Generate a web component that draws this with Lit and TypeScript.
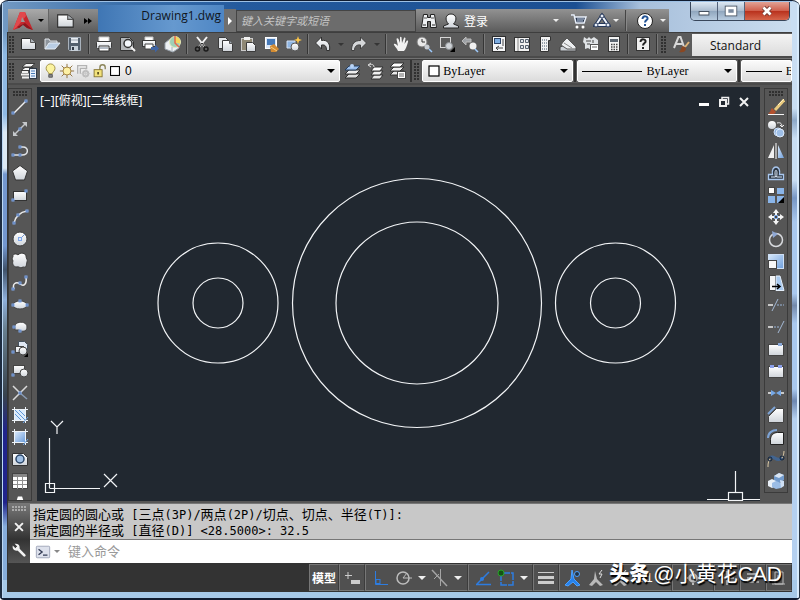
import { LitElement, html, css, svg, nothing } from "lit";
import { customElement } from "lit/decorators.js";

const node = (x: number, y: number) =>
  svg`<rect x=${x - 1} y=${y - 1} width="2" height="2" fill="#3c4a60" stroke="#7fa8ec" stroke-width="1"/>`;

const icons: Record<string, unknown> = {
  new: svg`<path d="M1.500 3.500h9l5 4v7h-14z" fill="url(#paper)" stroke="#2c2c2c"/><path d="M10.500 3.500v4h5" fill="#aeb4ba" stroke="#555"/>`,
  open: svg`<path d="M2 14V4h4l1 2h7v2" fill="#8e959d" stroke="#e0e4e8"/><path d="M2 14l4-6h11l-5 6z" fill="#b9cde4" stroke="#e6edf5"/>`,
  save: svg`<path d="M2.500 2.500h12v13h-11l-1-1z" fill="#54606e" stroke="#a9b2bc"/><rect x="5" y="3" width="7" height="5" fill="#e9edf2"/><path d="M5 5h7" stroke="#98a2ad"/><rect x="5" y="11" width="7" height="5" fill="#c8d1da"/><rect x="6" y="12" width="2" height="3" fill="#303844"/>`,
  print: svg`<path d="M4 7V2h10v5" fill="#fff" stroke="#c9c9c9"/><rect x="1.500" y="6.500" width="15" height="7" rx="1" fill="url(#paper)" stroke="#3a3a3a"/><path d="M4 11h10v5H4z" fill="#fff" stroke="#333"/><path d="M5 13h8" stroke="#6d7c90"/>`,
  preview: svg`<path d="M2.500 2.500h9l4 4v9h-13z" fill="#b4b7ba" stroke="#333"/><circle cx="10" cy="8.500" r="4" fill="#f3f7fb" stroke="#333" stroke-width="1.500"/><path d="M13 12l4 4" stroke="#f2f2f2" stroke-width="2"/>`,
  publish: svg`<path d="M4 6V2h8v4" fill="#fff" stroke="#c9c9c9"/><rect x="1.500" y="5.500" width="13" height="6" fill="url(#paper)" stroke="#3a3a3a"/><path d="M4 9h8v5H4z" fill="#fff" stroke="#444"/><path d="M10 12h4V9.500l4 4-4 4V15h-4z" fill="#3e64a4"/>`,
  dwf: svg`<path d="M1 8l5-4 9 4v5l-6 4-8-3z" fill="#edf0f3" stroke="#9aa3ad"/><circle cx="11" cy="7" r="5.500" fill="#9fd0b7" stroke="#e5e9c0"/><path d="M11 1.500c4 0 6 4 5 7l-5-1z" fill="#f4d75e"/><path d="M11 1v7l4 4" stroke="#e3694d" fill="none" stroke-width="1.500"/><path d="M8 12v5" stroke="#a9b2bc"/>`,
  cut: svg`<path d="M4 2l8 10M14 2L6 12" stroke="#f3f3f3" stroke-width="2"/><circle cx="4.500" cy="14" r="2" fill="none" stroke="#1b1b1b" stroke-width="1.500"/><circle cx="13" cy="14" r="2" fill="none" stroke="#1b1b1b" stroke-width="1.500"/><path d="M6 12l3-4 3 4" stroke="#1b1b1b" fill="none"/>`,
  copy: svg`<path d="M2.500 2.500h7l3 3v8h-10z" fill="#e4e7ea" stroke="#3b3b3b"/><path d="M6.500 5.500h7l3 3v8h-10z" fill="url(#paper)" stroke="#3b3b3b"/><path d="M13.500 5.500v3h3" fill="#9ea6ae" stroke="#555"/>`,
  paste: svg`<rect x="2.500" y="3.500" width="11" height="12" fill="#8f8874" stroke="#ccc"/><rect x="5" y="2" width="6" height="3" fill="#f2f2f2"/><path d="M7.500 7.500h6l3 3v6h-9z" fill="url(#paper)" stroke="#3b3b3b"/>`,
  match: svg`<rect x="3.500" y="2.500" width="11" height="11" fill="#d9e6f6" stroke="#fff"/><rect x="5" y="4" width="8" height="6" fill="#477ab8"/><path d="M8 11l4-2 5 5-3 3H9z" fill="#d38b32"/><path d="M9 12l6 4" stroke="#f9cf80"/>`,
  block: svg`<path d="M2 6h8v7H2z" fill="#8fb5e2" stroke="#d6e3f5"/><circle cx="10" cy="12" r="4" fill="url(#paper)" stroke="#555"/><path d="M13 1l1 3 3 1-3 1-1 3-1-3-3-1 3-1z" fill="#ffc84a"/>`,
  undo: svg`<path d="M1.500 8l6-6v3.500c6-1 9 3 8 10h-3c0-4-1-6-5-5.500V14z" fill="url(#paper)" stroke="#303030"/>`,
  redo: svg`<path d="M16.500 8l-6-6v3.500c-6 0-9 3-9 10h3c0-4 2-6 6-5.500V14z" fill="#d5d7d9" stroke="#404040"/>`,
  pan: svg`<path d="M6 16c-1-3-5-6-4-7s3 1 4 2L4.500 4c0-1 1.500-1 2 0L8 8V2.500c0-1 1.500-1 1.500 0L10 8l2-5c0-1 1.500-.5 1.500.5L12.500 9l2-3c1-1 2 0 1.500 1-1 3-2 7-4 9z" fill="#f2f2f2"/>`,
  zoomrt: svg`<circle cx="7" cy="7" r="5" fill="#e9e9e9" stroke="#777"/><path d="M7 4v3h3" stroke="#333" fill="none"/><circle cx="12" cy="12" r="2.500" fill="#c7ccd2"/><path d="M14 14l3 3" stroke="#9ecbff" stroke-width="1.500"/>`,
  zoomwin: svg`<rect x="2.500" y="2.500" width="10" height="10" fill="none" stroke="#d5d5d5"/><circle cx="11" cy="11" r="3.500" fill="#cfd3d7" stroke="#8b8f93"/><path d="M17 12v5h-5z" fill="#000"/>`,
  zoomprev: svg`<path d="M1 6l4-4v2h5v3H5v3z" fill="#9da1a6" stroke="#bbb"/><circle cx="12" cy="11" r="3.500" fill="#f0f0f0"/><path d="M14 14l3 3" stroke="#9ecbff" stroke-width="1.500"/>`,
  props: svg`<rect x="2.500" y="1.500" width="13" height="15" fill="#f5f6f8" stroke="#2e2e2e"/><rect x="4.500" y="3.500" width="6" height="5" fill="#7eaee2" stroke="#2c4468"/><path d="M13 4v7M6 13h7M9 11l-3 2 2 2" stroke="#444" fill="none"/>`,
  design: svg`<rect x="1.500" y="2.500" width="15" height="14" fill="#f2f2f2" stroke="#333"/><path d="M5 3v13" stroke="#888"/><path d="M7.500 4.500h3v3h-3zM12.500 4.500h3v3h-3zM7.500 10.500h3v3h-3zM12.500 10.500h3v3h-3z" fill="#dfe4ea" stroke="#56616e"/>`,
  palettes: svg`<path d="M4.500 1.500h10v4h-2v11h-8z" fill="#f2f2f2" stroke="#333"/><path d="M6.500 4v11M8.500 4v11M10.500 4v11" stroke="#97a0aa" stroke-dasharray="2 1"/>`,
  sheets: svg`<path d="M1 12l5-2 11 2v4H1z" fill="#cbd0d5" stroke="#444"/><path d="M4 7l4-4 9 9v2H8L2 10z" fill="#eceef0" stroke="#555"/><path d="M5 8l8 5" stroke="#888"/>`,
  markup: svg`<path d="M2 2l3 2 2-2 2 2 3-2 4 3v6l-2 1 1 2-4-1-2 2-3-2-3 1V9L1 7z" fill="#dfe2e5"/><path d="M4 6h5M5 9h3M11 5v3" stroke="#444"/><rect x="8.500" y="9.500" width="8" height="6" fill="#fff" stroke="#555"/><path d="M10 12h5" stroke="#666"/>`,
  calc: svg`<rect x="3.500" y="1.500" width="11" height="15" fill="#f2f2f2" stroke="#333"/><rect x="5" y="4" width="8" height="3" fill="#5b6570"/><path d="M6 9.500h7M6 12h7M6 14.500h7" stroke="#444" stroke-width="1.500" stroke-dasharray="1.500 1"/>`,
  help: svg`<rect x="2.500" y="2.500" width="13" height="13" fill="#f0f0f0" stroke="#333"/><path d="M6.500 7c0-4 6-3 5 0-.5 1-2.500 1.500-2.500 3.500M9 12v2" stroke="#222" stroke-width="2" fill="none"/>`,
  textstyle: svg`<path d="M2 13L6.500 2h2L12 12M4 9h6" stroke="#d8d8d8" stroke-width="2" fill="none"/><path d="M17 7l-4 5" stroke="#e0b477" stroke-width="2"/><path d="M11 11l3 2c0 4-3 5-7 4 2-1 2-5 4-6z" fill="#8a4722"/>`,
  layers: svg`<path d="M6 1.500h9l-4 3.500H2zM5 5.500h8l-3 3H1z" fill="#f4f4f4" stroke="#3c3c3c" stroke-width="1"/><path d="M1 12.500h8M2 10h6M2 15.500h7" stroke="#f0f0f0" stroke-width="2"/><rect x="9.500" y="6.500" width="7" height="10" fill="#eaf1fb" stroke="#2f3a48"/><path d="M11 9h4M11 11.500h4M11 14h4" stroke="#4679b6"/>`,
  layermake: svg`<path d="M6 12h11l-4 4H2z" fill="#ddd" stroke="#333"/><path d="M6 8h11l-4 4H2z" fill="#eee" stroke="#333"/><path d="M6 4h11l-4 4H2z" fill="#9cc0ee" stroke="#263e5d"/><circle cx="9" cy="4" r="2" fill="#b9d4f6"/>`,
  layerprev: svg`<path d="M8 13h9l-3 4H5z" fill="#e8e8e8" stroke="#333"/><path d="M8 9h9l-3 4H5z" fill="#f1f1f1" stroke="#333"/><path d="M8 5h9l-3 4H5z" fill="#fff" stroke="#333"/><path d="M8 5c0-3-3-3-5-2M5 1L2 3l3 2" stroke="#ddd" fill="none"/>`,
  layerstate: svg`<path d="M5 9h10l-4 4H1z" fill="#e8e8e8" stroke="#333"/><path d="M5 5h10l-4 4H1z" fill="#f1f1f1" stroke="#333"/><path d="M5 1h10l-4 4H1z" fill="#fff" stroke="#333"/><rect x="8.500" y="9.500" width="8" height="7" fill="#fff" stroke="#444"/><path d="M10 12h5M10 14h5" stroke="#666"/>`,
  bulb: svg`<path d="M6.500 12c0-2-3-3-3-6a5 5 0 0110 0c0 3-3 4-3 6z" fill="#fbf3a0" stroke="#9c8b3e"/><path d="M6.500 13h4v3h-4z" fill="#888" stroke="#555"/>`,
  sun: svg`<path d="M9 1v16M1 9h16M3 3l12 12M15 3L3 15" stroke="#8b6b33"/><circle cx="9" cy="9" r="4.500" fill="#fdf0a4" stroke="#9c7a36"/>`,
  freeze: svg`<path d="M3 12V3h10v4M6 12V6h7" fill="none" stroke="#b3b3b3" stroke-width="1.500"/><circle cx="12" cy="12" r="3" fill="none" stroke="#bcbcbc" stroke-width="2"/><path d="M12 7v10M7 12h10" stroke="#c6c6c6"/>`,
  lock: svg`<path d="M10 8V5c0-4 6-4 6 0v2" fill="none" stroke="#8a8458" stroke-width="1.500"/><rect x="3.500" y="7.500" width="9" height="8" fill="#f2e27c" stroke="#827230"/><path d="M8 10v3" stroke="#5e5220" stroke-width="2"/>`,
  square: svg`<rect x="4" y="4" width="10" height="10" fill="#fff" stroke="#000" stroke-width="1.200"/>`,
  line: svg`<path d="M3 15L15 3" stroke="#f0f0f0" stroke-width="1.500"/>${node(2, 15)}${node(15, 3)}`,
  xline: svg`<path d="M4 14L14 4" stroke="#c5c8cb" stroke-width="1.500"/><path d="M2 16v-5l5 5zM16 2v5l-5-5z" fill="#c5c8cb"/>${node(9, 9)}`,
  pline: svg`<path d="M2 13h9c7 0 7-8 1-8H9" stroke="#e0e3e6" stroke-width="1.500" fill="none"/>${node(2, 13)}${node(9, 13)}${node(9, 5)}`,
  polygon: svg`<path d="M9 1.500L16.500 7l-3 9h-9l-3-9z" fill="url(#paper)" stroke="#333"/>`,
  rect: svg`<rect x="2.500" y="5.500" width="13" height="9" fill="url(#paper)" stroke="#333"/>${node(2, 14)}${node(15, 5)}`,
  arc: svg`<path d="M3 15C4 9 9 4 16 3" stroke="#e6e6e6" stroke-width="1.500" fill="none"/>${node(3, 15)}${node(7, 7)}${node(16, 3)}`,
  circle: svg`<circle cx="9" cy="9" r="7" fill="url(#paper)" stroke="#3c3c3c"/><path d="M9 9l5-5" stroke="#7593c5"/><rect x="7.500" y="7.500" width="3" height="3" fill="#dfe8f4" stroke="#7fa8ec"/>`,
  cloud: svg`<path d="M2 5c-1-3 3-4 5-2 2-3 8-2 8 1s2 3 1 6 0 6-4 5c-3 2-4-1-6 0-4 0-5-4-4-6-1-2-1-3 0-4z" fill="url(#paper)" stroke="#3a3a3a"/>`,
  spline: svg`<path d="M3 15C1 10 5 7 9 10s7 0 6-7" stroke="#ececec" stroke-width="1.500" fill="none"/>${node(2, 15)}${node(9, 9)}${node(15, 3)}`,
  ellipse: svg`<ellipse cx="9" cy="9" rx="7" ry="4" fill="url(#paper)" stroke="#444"/>${node(2, 9)}${node(16, 9)}${node(9, 5)}`,
  ellarc: svg`<path d="M4 10c-2-7 12-8 12-1 0 5-5 5-8 3H4z" fill="url(#paper)" stroke="#444"/>${node(3, 9)}${node(9, 13)}`,
  insert: svg`<path d="M7.500 1.500h6l3 3v6h-9z" fill="#dfe7f2" stroke="#46525f"/><rect x="4.500" y="6.500" width="8" height="6" fill="url(#paper)" stroke="#444"/><circle cx="12" cy="11" r="4" fill="url(#paper)" stroke="#444"/>${node(2, 12)}<path d="M17 13v4h-4z"/>`,
  makeblock: svg`<rect x="2.500" y="3.500" width="11" height="8" fill="url(#paper)" stroke="#444"/><circle cx="13" cy="11" r="4" fill="url(#paper)" stroke="#444"/>${node(2, 13)}`,
  point: svg`<path d="M2 2l7 7M16 2L2 16" stroke="#dadada" stroke-width="1.500"/><path d="M9 9l7 6" stroke="#8a9cb4" stroke-width="1.500"/>${node(9, 9)}`,
  hatch: svg`<rect x="4" y="4" width="10" height="10" fill="#dcebfb"/><path d="M4 8l6 6M4 4l10 10M8 4l6 6" stroke="#5f97d8"/><path d="M3.500 1v16M14.500 1v16M1 3.500h16M1 14.500h16" stroke="#eef3f8"/><path d="M12 17l5-6" stroke="#6aa4e8"/>`,
  gradient: svg`<rect x="4" y="4" width="10" height="10" fill="url(#blue)"/><path d="M3.500 1v16M14.500 1v16M1 3.500h16M1 14.500h16" stroke="#eef3f8"/><path d="M12 17l5-6" stroke="#6aa4e8"/>`,
  region: svg`<path d="M1.500 3.500h11l4 4v8h-15z" fill="url(#paper)" stroke="#333"/><circle cx="9" cy="9" r="4" fill="#9fbfe4" stroke="#2b4668" stroke-width="1.500"/>`,
  table: svg`<rect x="1.500" y="1.500" width="15" height="15" fill="#fff" stroke="#444"/><path d="M2 3.500h14" stroke="#888" stroke-width="3"/><path d="M2 8.500h14M2 12.500h14M6.500 5v12M11.500 5v12" stroke="#909090"/>`,
  text: svg`<path d="M4 17L8 4h2l4 13M6 11h6" stroke="#fff" stroke-width="3" fill="none"/>`,
  erase: svg`<path d="M17 2L8 12" stroke="#eacb7f" stroke-width="3"/><path d="M17 1l-6 6" stroke="#fff0c0"/><path d="M5 10l4 4c-2 3-5 3-8 1 3 0 2-3 4-5z" fill="#b4512d"/><path d="M1 16.500h16" stroke="#f5f5f5"/>`,
  copyobj: svg`<circle cx="5" cy="5" r="4" fill="url(#paper)"/><circle cx="11" cy="12" r="4" fill="#8fb2df" stroke="#cfe0f6"/><circle cx="13" cy="13" r="4" fill="#9ebfe8" stroke="#dfebfa"/><path d="M10 3c4-1 5 1 5 4M13 5l2 2 2-2" stroke="#eee" fill="none"/>`,
  mirror: svg`<path d="M7 3v13H1z" fill="#f1f1f1"/><path d="M11 3v13h6z" fill="url(#blue)"/><path d="M9 1v16" stroke="#fff"/>`,
  offset: svg`<path d="M1.500 15.500v-5h4c-2-10 9-10 7 0h4v5z" fill="#2d3744" stroke="#a9c7ee" stroke-width="1.300"/><path d="M4 13h4.500c-2-9 3-9 1 0H15" fill="none" stroke="#dce8f6"/>`,
  array: svg`<rect x="1.500" y="1.500" width="6" height="6" fill="#fff" stroke="#444"/><path d="M10 2h7v6h-7zM1 10h7v7H1zM10 10h7v7h-7z" fill="#8ab5e9"/><path d="M17 11v6h-6z"/>`,
  move: svg`<path d="M9 1l3 4h-2v2H8V5H6zM9 17l3-4h-2v-2H8v2H6zM1 9l4-3v2h2v2H5v2zM17 9l-4-3v2h-2v2h2v2z" fill="#f4f4f4"/><rect x="7.500" y="7.500" width="3" height="3" fill="#444" stroke="#7fa8e0"/>`,
  rotate: svg`<circle cx="9" cy="10" r="6.500" fill="none" stroke="#d8dade" stroke-width="1.500"/><path d="M5 1l6 3-5 4z" fill="#8fa8d4"/>`,
  scale: svg`<rect x="1.500" y="2.500" width="15" height="14" fill="url(#blue)" stroke="#cfe0f5"/><rect x="1.500" y="8.500" width="8" height="8" fill="#f7f7f7" stroke="#444"/>`,
  stretch: svg`<path d="M2.500 1.500h6v15h-6z" fill="#f4f6f8" stroke="#444"/><path d="M9 2h4l4 14.500H9z" fill="#a9caf0" stroke="#e5effa"/><path d="M5 12.500h7M10 10l3 2.500-3 2.500" stroke="#000" stroke-width="1.500" fill="none"/>`,
  trim: svg`<path d="M1 9h5" stroke="#eee" stroke-width="1.500"/><path d="M5 15l6-12" stroke="#a4b9d5"/><path d="M10 9h7" stroke="#9ab5d8" stroke-dasharray="2 1"/>`,
  extend: svg`<path d="M1 9h5" stroke="#eee" stroke-width="1.500"/><path d="M11 15l6-12" stroke="#a4b9d5"/><path d="M7 9h5" stroke="#9ab5d8" stroke-dasharray="2 1"/>`,
  breakpt: svg`<rect x="1.500" y="4.500" width="15" height="11" fill="url(#paper)" stroke="#444"/><rect x="11" y="3" width="4" height="3" fill="#8aa9d9"/>`,
  break: svg`<rect x="1.500" y="4.500" width="15" height="11" fill="url(#paper)" stroke="#444"/><rect x="3" y="3" width="4" height="3" fill="#8ca0e9"/><rect x="11" y="3" width="4" height="3" fill="#8ca0e9"/>`,
  join: svg`<path d="M1 9h4M13 9h4" stroke="#f1f1f1" stroke-width="1.500"/><path d="M4 6l5 3-5 3zM14 6L9 9l5 3z" fill="#76a8e6"/>`,
  chamfer: svg`<path d="M1.500 16.500v-6l8-8h7v14z" fill="url(#paper)" stroke="#444"/><path d="M1 8l7-7" stroke="#7da3d5" stroke-width="2"/>`,
  fillet: svg`<path d="M3.500 16.500v-5c0-4 3-7 7-7h6v12z" fill="url(#paper)" stroke="#222"/><path d="M1 10c0-5 4-8 9-8" stroke="#7da3d5" stroke-width="2" fill="none"/>`,
  blend: svg`<path d="M3 8c4-4 6 5 12 0" stroke="#42648f" stroke-width="3" fill="none"/><path d="M1 17c0-3 0-5 2-8M15 8c1-2 2-4 2-7" stroke="#ddcba7" fill="none"/><circle cx="3" cy="9" r="2" fill="none" stroke="#10233c"/><circle cx="15" cy="8" r="2" fill="none" stroke="#10233c"/>`,
  explode: svg`<path d="M7 4l5-3 5 2v5l-5 3-5-2z" fill="#729bcd"/><path d="M7 4l5-3 5 2-5 3z" fill="#dbe6f3"/><path d="M1 9l4-2 4 2v5l-4 2-4-2z" fill="#e9f0f8"/><path d="M5 11l4-2 5 2v5l-5 1-4-2z" fill="#9bbde6"/><path d="M13 8l4 1v5l-3 2z" fill="#cfe0f4"/>`,
  binoculars: svg`<path d="M3.500 2.500h4v3h3v-3h4l2 13h-6v-6h-3v6h-6z" fill="#eff1f3" stroke="#222"/><path d="M4 6h3M11 6h3" stroke="#555"/><path d="M3 13h3M12 13h3" stroke="#222"/>`,
  user: svg`<path d="M1.500 16v-2l5-2c-4-4-3-10 2.500-10s6.500 6 2.500 10l5 2v2z" fill="url(#paper)" stroke="#262626"/>`,
  cart: svg`<path d="M1 3h3l2 8h8l2-6H5" fill="#26324a" stroke="#e9f0fa" stroke-width="1.500"/><circle cx="7" cy="15" r="1.500" fill="#fff"/><circle cx="13" cy="15" r="1.500" fill="#fff"/><path d="M7 7h7M7 9h6" stroke="#c9daf0"/>`,
  a360: svg`<path d="M9 4L3 13h12z" fill="none" stroke="#26385a" stroke-width="4"/><path d="M9 4L3 13h12z" fill="none" stroke="#f1f5fb" stroke-width="2"/><circle cx="9" cy="4" r="2" fill="#e8eef8" stroke="#26385a"/><circle cx="3" cy="13" r="2" fill="#e8eef8" stroke="#26385a"/><circle cx="15" cy="13" r="2" fill="#e8eef8" stroke="#26385a"/>`,
  qmark: svg`<circle cx="9" cy="9" r="7.500" fill="#fff" stroke="#222"/><path d="M6.500 7c0-4 6-3 5 0-.5 1-2.500 1.500-2.500 3.500M9 12v2" stroke="#235394" stroke-width="2" fill="none"/>`,
  snapgrid: svg`<path d="M5 3v7M2 6.500h7" stroke="#ccc"/><rect x="8" y="11" width="9" height="4" fill="#ccc"/>`,
  ortho: svg`<path d="M3.500 2v13.500H16" stroke="#2d7ce0" fill="none"/><rect x="4" y="10.500" width="4" height="4" fill="none" stroke="#2d7ce0"/>`,
  polar: svg`<circle cx="8" cy="9" r="6" fill="none" stroke="#bdbdbd" stroke-width="1.500"/><path d="M8 9h9M8 9l4-5" stroke="#bdbdbd"/>`,
  iso: svg`<path d="M1 1l15 16" stroke="#a5a5a5" stroke-width="1.500"/><path d="M9.500 0v17M3 10l5-5" stroke="#a5a5a5"/>`,
  otrack: svg`<path d="M2 15.500h15M3 15L15 3" stroke="#2d7ce0" stroke-width="1.500" fill="none"/><circle cx="8" cy="10" r="2" fill="#2d7ce0"/>`,
  osnap: svg`<rect x="4" y="4" width="12" height="12" fill="none" stroke="#2d7ce0" stroke-width="1.500" stroke-dasharray="9 1"/><circle cx="4" cy="4" r="3" fill="#145214" stroke="#29a329"/>`,
  weight: svg`<path d="M1 3.500h16" stroke="#ccc"/><path d="M1 8.500h16M1 13.500h16" stroke="#ccc" stroke-width="3"/><path d="M10 6h8M10 11h8" stroke="#505050" stroke-width="2"/>`,
  anno: svg`<path d="M8 1l2 9 6 6-3 1-4-4-5 4-3-1 6-6z" fill="#2581ec" stroke="#4da2ff"/><circle cx="13" cy="5" r="2.500" fill="#234" stroke="#4da2ff"/>`,
  annogray: svg`<path d="M7 2l2 8 6 6-3 1-4-4-4 4-3-1 5-6z" fill="#b9b9b9"/><path d="M14 1l-3 4h3l-2 4" stroke="#ddd" fill="none"/>`,
  gear: svg`<circle cx="9" cy="9" r="3.500" fill="none" stroke="#bbb" stroke-width="2.500"/><path d="M9 2v14M2 9h14" stroke="#bbb" stroke-width="2" stroke-dasharray="2 10"/>`,
  plus: svg`<path d="M9 2v14M2 9h14" stroke="#b9b9b9" stroke-width="1.500"/>`,
  menu: svg`<path d="M3 5h12M3 9h12M3 13h12" stroke="#b9b9b9" stroke-width="1.500"/>`,
  screen: svg`<path d="M5 3h8v12H5zM2 15h13M8 6v6" stroke="#bbb" fill="none"/>`,
  close: svg`<path d="M4 4l10 10M14 4L4 14" stroke="#f2f2f2" stroke-width="2.500"/>`,
  docclose: svg`<path d="M5 5l8 8M13 5l-8 8" stroke="#f2f2f2" stroke-width="2"/>`,
  wrench: svg`<path d="M7 7l8 8" stroke="#f2f2f2" stroke-width="3" stroke-linecap="round"/><path d="M2 4l3 3 2-2-3-3c5-1 7 3 5 7-4 2-8 0-7-5z" fill="#f2f2f2"/>`,
  prompt: svg`<rect x="1.500" y="2.500" width="15" height="13" rx="1" fill="#dde1ec" stroke="#9ba1b4"/><path d="M4 6l4 3-4 3M9 12.500h5" stroke="#333c55" stroke-width="1.500" fill="none"/>`,
  min: svg`<path d="M4 11.500h10" stroke="#fff" stroke-width="3"/>`,
  restore: svg`<path d="M7 6V4.500h6.500V11H12" stroke="#eee" stroke-width="1.500" fill="none"/><rect x="5" y="7" width="6" height="6" fill="none" stroke="#eee" stroke-width="2"/>`,
  max: svg`<rect x="4.500" y="5.500" width="9" height="7" fill="none" stroke="#4b5666" stroke-width="5"/><rect x="4.500" y="5.500" width="9" height="7" fill="#7b8a9e" stroke="#fff" stroke-width="3"/>`,
  xwin: svg`<path d="M5 5l8 8M13 5l-8 8" stroke="#793c34" stroke-width="5"/><path d="M5 5l8 8M13 5l-8 8" stroke="#fff" stroke-width="3"/>`,
  minwin: svg`<path d="M3 11.500h12" stroke="#46515f" stroke-width="5"/><path d="M4 11.500h10" stroke="#fff" stroke-width="3"/>`,
};

const mainTools: (string | string[])[][] = [
  ["new", "open", "save"],
  ["print", "preview", "publish", "dwf"],
  ["cut", "copy", "paste", "match", "block"],
  [["undo", "caret"], ["redo", "caret"]],
  ["pan", "zoomrt", "zoomwin", "zoomprev"],
  ["props", "design", "palettes", "sheets", "markup", "calc"],
  ["help"],
];
const drawTools = ["line", "xline", "pline", "polygon", "rect", "arc", "circle", "cloud", "spline", "ellipse", "ellarc", "insert", "makeblock", "point", "hatch", "gradient", "region", "table", "text"];
const modifyTools = ["erase", "copyobj", "mirror", "offset", "array", "move", "rotate", "scale", "stretch", "trim", "extend", "breakpt", "break", "join", "chamfer", "fillet", "blend", "explode"];

@customElement("app-root")
export class AppRoot extends LitElement {
  static styles = css`
    :host { display: block; font-family: "Liberation Sans", "Noto Sans CJK SC", sans-serif; font-size: 12px; color: #fff; }
    * { box-sizing: border-box; }
    button, input, select { font: inherit; color: inherit; border: 0; padding: 0; margin: 0; background: none; border-radius: 0; }
    select { appearance: none; outline: 0; }
    svg { display: block; flex: none; }
    .defs { position: absolute; width: 0; height: 0; }
    .window {
      height: 100vh; min-height: 400px; display: flex; flex-direction: column; padding: 0 8px 6px; overflow: hidden;
      border: 1px solid #101c30; border-width: 1px 0 2px; border-radius: 8px 8px 4px 4px;
      background:
        linear-gradient(90deg, transparent 0 7px, #333 7px calc(100% - 8px), transparent calc(100% - 8px)) 0 31px / 100% calc(100% - 37px) no-repeat,
        linear-gradient(90deg, #1d2c40 0 2px, #bcd8f4 2px 3px, transparent 3px calc(100% - 3px), #d8ebfc calc(100% - 3px) calc(100% - 1px), #26323f calc(100% - 1px)),
        linear-gradient(180deg, transparent 0 97%, #a6c9e8 97%),
        linear-gradient(180deg, transparent 0 5%, #8fb9e4 9% 19%, #dce9f4 22% 28%, #7397cf 29% 41%, #40536b 45%, #8fb0dc 50%, #687f8f 55%, #38434e 66%, #20248c 72% 84%, #86addb 88%) 0 0 / 8px 100% no-repeat,
        linear-gradient(180deg, #c9def3 0 18%, #8ea9c8 20%, #c9def3 23% 30%, #7696c4 33%, #a9c8ee 37% 49%, #7389aa 51%, #a9c8ee 54% 65%, #6d87b0 67%, #b4d0f0 70%) 100% 0 / 9px 100% no-repeat,
        linear-gradient(90deg, #739ac3 0, #3e72ac 14%, #245a9d 30%, #1b4f92 72%, #a7bfdb 80%, #cddff0 100%);
    }
    .titlebar { display: flex; align-items: flex-end; height: 31px; flex: none; border-top: 1px solid #9dc0e4; }
    .cell, .tool, .caretbtn { display: flex; align-items: center; justify-content: center; flex: none; }
    .app { width: 41px; height: 23px; background: linear-gradient(#aaa, #777); justify-content: space-evenly; border-right: 1px solid #666; }
    .quick { width: 49px; height: 23px; background: linear-gradient(#8d8d8d, #5c5c5c); gap: 8px; }
    .title { flex: 1 1 126px; height: 27px; padding: 0 3px 0 0; text-align: right; font: 12px/26px "Open Sans", sans-serif; line-height: 22px; color: #10151d; background: linear-gradient(90deg, #3f76b4, #6699cf 60%, #4e86c4); white-space: nowrap; margin: 0; }
    .expand { width: 12px; height: 23px; background: #6f6f6f; }
    .search { flex: 1 1 180px; min-width: 60px; width: 0; height: 22px; background: #6c6c6c; border: 1px solid #444; padding: 0 4px; font-size: 11px; font-style: italic; outline: 0; }
    .search::placeholder { color: #c4c4c4; opacity: 1; }
    .info { flex: 1 1 253px; height: 23px; display: flex; align-items: center; background: linear-gradient(#929292, #5b5b5b); padding-left: 1px; }
    .login { display: flex; align-items: center; gap: 4px; margin-left: 2px; }
    .push { margin-left: auto; }
    .signin { margin-right: 8px; }
    .rule { width: 1px; height: 21px; background: #444; border-right: 1px solid #888; box-sizing: content-box; margin: 0 6px; }
    .winbtns { display: flex; align-self: flex-start; margin: 0 2px 0 21px; height: 19px; border: 1px solid #38465a; border-top: 0; border-radius: 0 0 5px 5px; overflow: hidden; flex: none; }
    .winbtn { width: 27px; background: linear-gradient(#dde8f3, #a9bacd 50%, #8fa5bd 50%, #b7cbdf); border-right: 1px solid #53627a; }
    .winclose { width: 44px; border: 0; background: linear-gradient(#e2a295, #cf5e4b 50%, #b8301c 50%, #d5654b); }
    .bar { display: flex; align-items: center; flex: none; height: 27px; background: linear-gradient(#3e3e3e 0 1px, #5b5b5b 1px 24px, #4a4a4a 24px); border-bottom: 1px solid #717171; padding-bottom: 2px; }
    .bar.props { height: 28px; border-bottom: 2px solid #555; }
    .grip { width: 6px; height: 17px; flex: none; margin: 0 2px 0 1px; background: radial-gradient(circle at 1px 1px, #303030 0 1px, transparent 1px) 0 0 / 3px 3px; }
    .grip.flat { width: 15px; height: 5px; margin: 2px auto 0; }
    .tool { width: 23px; height: 22px; }
    .caretbtn { width: 13px; height: 22px; }
    .caret { width: 0; height: 0; border: 4px solid transparent; border-top-color: #eee; border-bottom: 0; flex: none; }
    .caret.dark { border-top-color: #000; }
    .caret.dim { border-width: 3px 3px 0; border-top-color: #353535; }
    .caret.small { border-width: 3px 3px 0; }
    .sep { width: 2px; height: 20px; margin: 0 2px; border-left: 1px solid #353535; border-right: 1px solid #7a7a7a; flex: none; }
    .group { display: flex; align-items: center; flex: none; }
    .style { flex: 1 1 103px; min-width: 0; align-self: stretch; margin: 2px 0 0; padding-left: 18px; color: #111; font: 12px "Open Sans", sans-serif; background: linear-gradient(#f4f4f4, #dcdcdc); }
    .combo { display: flex; align-items: center; min-width: 0; height: 22px; background: linear-gradient(#fafafa, #dcdcdc); border: 1px solid #fff; border-radius: 2px; color: #000; padding: 0 4px 0 2px; font: 12px "Liberation Serif", serif; }
    .combo select { flex: 1; min-width: 0; width: 0; }
    .layer { flex: 1 1 300px; font-family: "Liberation Sans", sans-serif; }
    .color { flex: 1 1 150px; }
    .ltype { flex: 1 1 160px; }
    .lweight { flex: 1 1 51px; padding-right: 0; }
    .layer select { padding-left: 2px; }
    .sample { height: 1px; background: #000; flex: none; width: 60px; margin-left: 2px; }
    .sample.short { width: 36px; margin-right: 4px; }
    .ltype select { padding-left: 5px; }
    .divider { width: 2px; height: 22px; margin: 0 1px; background: #333; flex: none; }
    .work { flex: 1; min-height: 0; display: flex; background: #565656; padding-bottom: 2px; }
    .side { width: 24px; flex: none; border: 1px solid #3b3b3b; overflow: hidden; display: flex; flex-direction: column; align-items: center; align-self: stretch; margin-top: 1px; }
    .side.right { align-self: flex-start; margin: 1px 4px 0 4px; }
    .side .tool { width: 22px; }
    .canvas { flex: 1; min-width: 0; position: relative; background: #212830; margin-left: 5px; }
    .drawing { position: absolute; inset: 0; width: 100%; height: 100%; }
    .view { position: absolute; left: 3px; top: 6px; font: 12px/16px "Noto Sans", "Noto Sans CJK SC", sans-serif; white-space: nowrap; }
    .docbtns { position: absolute; right: 7px; top: 6px; display: flex; gap: 2px; }
    .cmd { display: flex; flex: none; height: 60px; border-top: 1px solid #777; }
    .cmdside { width: 22px; background: linear-gradient(#777, #333 60%, #555); display: flex; flex-direction: column; align-items: center; justify-content: space-between; padding-bottom: 5px; flex: none; }
    .cmdside .flat { background-image: radial-gradient(circle at 1px 1px, #aaa 0 1px, transparent 1px); }
    .cmdmain { flex: 1; min-width: 0; display: flex; flex-direction: column; }
    .history { background: #c8c8c8; color: #000; padding: 2px 3px; height: 36px; font: 12px/16px "DejaVu Sans Mono", monospace; white-space: nowrap; border-bottom: 1px solid #777; overflow: hidden; }
    .line { height: 16px; }
    .zh { font: 13px/16px "Noto Sans CJK SC", sans-serif; }
    .prompt { flex: 1; display: flex; align-items: center; gap: 3px; padding: 0 5px; background: #fff; }
    .prompt .caret { border-top-color: #888; }
    .entry { flex: 1; min-width: 0; height: 20px; margin-left: 5px; outline: 0; font-size: 13px; color: #000; }
    .entry::placeholder { color: #999; opacity: 1; }
    .status { display: flex; justify-content: flex-end; flex: none; height: 29px; background: #333; padding: 1px 0; position: relative; }
    .sgroup { display: flex; align-items: center; justify-content: center; gap: 6px; background: #505050; border: 1px solid #777; border-right-color: #3c3c3c; flex: none; }
    .model { width: 30px; font-weight: bold; }
    .w25 { width: 26px; } .w103 { width: 103px; gap: 5px; } .w65 { width: 65px; gap: 5px; } .w112 { width: 113px; padding-left: 4px; justify-content: flex-start; } .w42 { width: 42px; }
    .credit { position: absolute; right: 10px; top: -4px; font: 21px/30px "Liberation Sans", "Noto Sans CJK SC", sans-serif; text-shadow: 1px 2px 1px #000; white-space: nowrap; }
    .credit strong { font-size: 20px; font-weight: 900; margin-right: 4px; }
  `;

  icon(name: string, size = 18) {
    return html`<svg width=${size} height=${size} viewBox="0 0 18 18" aria-hidden="true">${icons[name]}</svg>`;
  }

  tool(name: string) {
    return html`<button class="tool" aria-label=${name}>${this.icon(name)}</button>`;
  }

  drawing() {
    return html`<svg class="drawing" viewBox="0 0 723 414" fill="none" stroke="#f2f4f6" stroke-width="1.200">
      <circle cx="380" cy="216" r="124.500"/><circle cx="380" cy="216" r="81"/>
      <circle cx="181" cy="216" r="60"/><circle cx="181" cy="216" r="25"/>
      <circle cx="578.500" cy="216" r="60"/><circle cx="578.500" cy="216" r="25"/>
      <path d="M12.500 401V351M12.500 401.500H63M8.500 396.500h9v9h-9zM14 334l6 6 6-6M20 340v7M67 387l13 13M80 387l-13 13"/>
      <path d="M698.500 384v21M670 412.500h53"/><rect x="691.500" y="405.500" width="14" height="8" fill="#212830"/>
    </svg>`;
  }

  render() {
    return html`
      <svg class="defs"><defs>
        <linearGradient id="paper" x2="0" y2="1"><stop stop-color="#fff"/><stop offset="1" stop-color="#cfd4da"/></linearGradient>
        <linearGradient id="blue" x2="1" y2="1"><stop stop-color="#d8e8fa"/><stop offset="1" stop-color="#6f9fdc"/></linearGradient>
      </defs></svg>
      <div class="window">
        <header class="titlebar">
          <button class="cell app" aria-label="Application menu">
            <svg width="22" height="22" viewBox="0 0 22 22"><path d="M1 20L8 2h5l8 18-6-2-4-4-4 4z" fill="#c4282d"/><path d="M8 2h5l1 4-9 11-4 3z" fill="#e2484c"/><path d="M10 7l3 5H9z" fill="#999"/><path d="M5 17l8-4 8 7-6-2-4-3-4 3z" fill="#8e171c"/></svg>
            <span class="caret dark small"></span>
          </button>
          <button class="cell quick" aria-label="Quick access">${this.icon("new", 20)}
            <svg width="8" height="6" viewBox="0 0 8 6"><path d="M0 0l4 3-4 3zM4 0l4 3-4 3z"/></svg>
          </button>
          <h1 class="title">Drawing1.dwg</h1>
          <button class="cell expand" aria-label="Expand"><svg width="4" height="8" viewBox="0 0 4 8"><path d="M0 0l4 4-4 4z" fill="#fff"/></svg></button>
          <input class="search" type="search" aria-label="搜索" placeholder="键入关键字或短语">
          <div class="info">
            ${this.tool("binoculars")}
            <button class="login">${this.icon("user")}<span>登录</span></button>
            <span class="cell push"><span class="caret small signin"></span>${this.tool("cart")}${this.tool("a360")}<span class="caret small"></span></span>
            <span class="rule"></span>
            ${this.tool("qmark")}
            <button class="caretbtn" aria-label="Help menu"><span class="caret small"></span></button>
          </div>
          <div class="winbtns">
            <button class="cell winbtn" aria-label="Minimize">${this.icon("minwin", 16)}</button>
            <button class="cell winbtn" aria-label="Maximize">${this.icon("max", 16)}</button>
            <button class="cell winclose" aria-label="Close">${this.icon("xwin", 16)}</button>
          </div>
        </header>
        <nav class="bar">
          <span class="grip"></span>
          ${mainTools.map((g, i) => html`${i ? html`<span class="sep"></span>` : nothing}<div class="group">
            ${g.map((t) => typeof t === "string" ? this.tool(t)
              : html`${this.tool(t[0])}<button class="caretbtn" aria-label="History"><span class="caret dim"></span></button>`)}
          </div>`)}
          <span class="sep"></span><span class="grip"></span>
          ${this.tool("textstyle")}
          <select class="style" aria-label="Text style"><option>Standard</option></select>
        </nav>
        <nav class="bar props">
          <span class="grip"></span>${this.tool("layers")}
          <div class="combo layer">
            ${["bulb", "sun", "freeze", "lock", "square"].map((n) => this.icon(n, 16))}
            <select aria-label="Layer"><option>0</option></select><span class="caret dark"></span>
          </div>
          ${this.tool("layermake")}${this.tool("layerprev")}${this.tool("layerstate")}
          <span class="divider"></span><span class="grip"></span>
          <div class="combo color">${this.icon("square")}<select aria-label="Color"><option>ByLayer</option></select><span class="caret dark"></span></div>
          <span class="divider"></span>
          <div class="combo ltype"><span class="sample"></span><select aria-label="Linetype"><option>ByLayer</option></select><span class="caret dark"></span></div>
          <span class="divider"></span>
          <div class="combo lweight"><span class="sample short"></span><select aria-label="Lineweight"><option>ByLayer</option></select></div>
        </nav>
        <main class="work">
          <nav class="side"><span class="grip flat"></span>${drawTools.map((t) => this.tool(t))}</nav>
          <section class="canvas">
            ${this.drawing()}
            <div class="view">[−][俯视][二维线框]</div>
            <div class="docbtns">${["min", "restore", "docclose"].map((t) => html`<button aria-label=${t}>${this.icon(t)}</button>`)}</div>
          </section>
          <nav class="side right"><span class="grip flat"></span>${modifyTools.map((t) => this.tool(t))}</nav>
        </main>
        <section class="cmd">
          <div class="cmdside"><span class="grip flat"></span>${this.icon("close", 14)}${this.icon("wrench", 16)}</div>
          <div class="cmdmain">
            <div class="history">
              <div class="line"><span class="zh">指定圆的圆心或</span> [<span class="zh">三点</span>(3P)/<span class="zh">两点</span>(2P)/<span class="zh">切点、切点、半径</span>(T)]:</div>
              <div class="line"><span class="zh">指定圆的半径或</span> [<span class="zh">直径</span>(D)] &lt;28.5000&gt;: 32.5</div>
            </div>
            <div class="prompt">${this.icon("prompt", 16)}<span class="caret small"></span><input class="entry" aria-label="命令" placeholder="键入命令"></div>
          </div>
        </section>
        <footer class="status">
          <button class="sgroup model">模型</button>
          <div class="sgroup w25">${this.icon("snapgrid")}</div>
          <div class="sgroup w103">${this.icon("ortho")}${this.icon("polar")}<span class="caret"></span>${this.icon("iso")}<span class="caret"></span></div>
          <div class="sgroup w65">${this.icon("otrack")}${this.icon("osnap")}<span class="caret"></span></div>
          <div class="sgroup w25">${this.icon("weight")}</div>
          <div class="sgroup w112">${this.icon("anno")}${this.icon("annogray")}${this.icon("annogray")}<span>1:1</span></div>
          <div class="sgroup w42">${this.icon("gear")}</div>
          <div class="sgroup w25">${this.icon("plus")}</div>
          <div class="sgroup w25">${this.icon("menu")}</div>
          <div class="sgroup w25">${this.icon("screen")}</div>
          <div class="credit"><strong>头条</strong>@小黄花CAD</div>
        </footer>
      </div>`;
  }
}
